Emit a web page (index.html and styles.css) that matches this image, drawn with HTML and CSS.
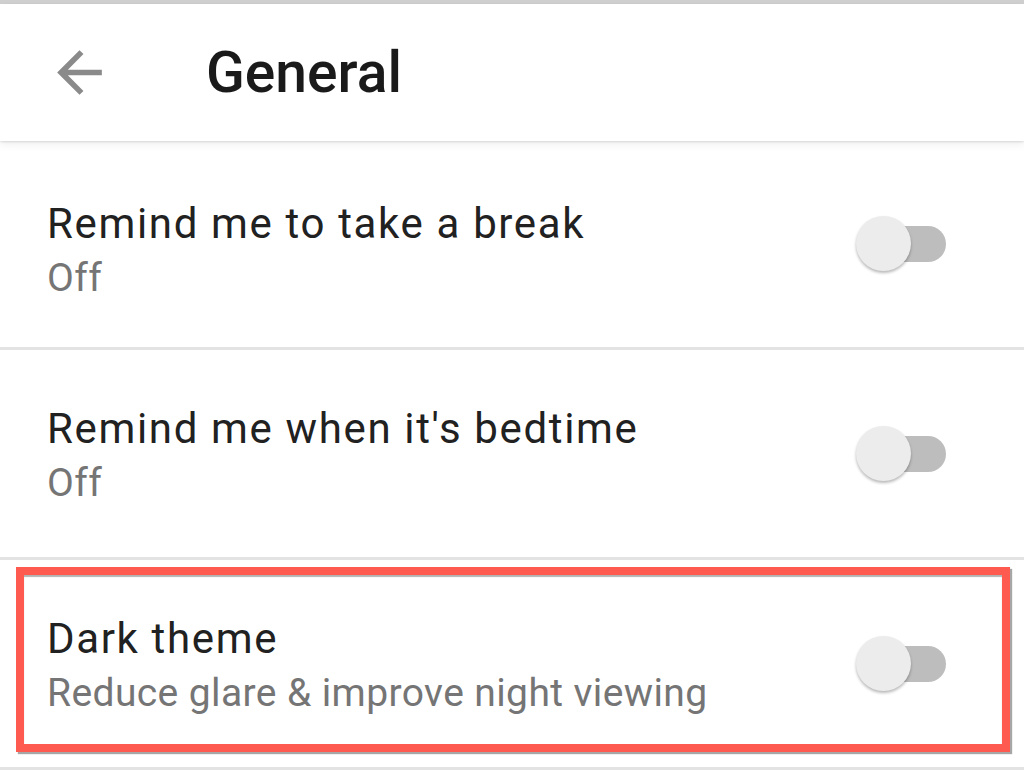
FILE: index.html
```html
<!DOCTYPE html>
<html lang="en">
<head>
<meta charset="utf-8">
<title>General</title>
<link rel="stylesheet" href="styles.css">
</head>
<body>
<div class="statusband"></div>
<header class="appbar">
  <button class="back" aria-label="Back">
    <svg viewBox="0 0 24 24" width="67" height="67"><path d="M20 11H7.83l5.59-5.59L12 4l-8 8 8 8 1.41-1.41L7.83 13H20v-2z" fill="#8a8a8a"/></svg>
  </button>
  <h1 class="title">General</h1>
</header>
<main class="list">
  <div class="row first">
    <div class="text">
      <div class="primary">Remind me to take a break</div>
      <div class="secondary">Off</div>
    </div>
    <div class="switch"><span class="track"></span><span class="thumb"></span></div>
  </div>
  <div class="row">
    <div class="text">
      <div class="primary">Remind me when it's bedtime</div>
      <div class="secondary">Off</div>
    </div>
    <div class="switch"><span class="track"></span><span class="thumb"></span></div>
  </div>
  <div class="row highlighted">
    <div class="text">
      <div class="primary">Dark theme</div>
      <div class="secondary">Reduce glare &amp; improve night viewing</div>
    </div>
    <div class="switch"><span class="track"></span><span class="thumb"></span></div>
  </div>
</main>
</body>
</html>
```
FILE: styles.css
```css
* { box-sizing: border-box; }
html, body { margin: 0; padding: 0; }
body {
  width: 1024px;
  height: 779px;
  overflow: hidden;
  background: #ffffff;
  font-family: Roboto, "Liberation Sans", sans-serif;
}
.statusband {
  height: 4px;
  background: #cfcfcf;
}
.appbar {
  position: relative;
  z-index: 2;
  height: 137px;
  background: #ffffff;
  display: flex;
  align-items: center;
  box-shadow: 0 1px 2px rgba(0,0,0,0.12), 0 4px 8px rgba(0,0,0,0.06);
}
.back {
  border: 0;
  background: none;
  padding: 0;
  margin-left: 46px;
  width: 67px;
  height: 67px;
  display: flex;
}
.title {
  margin: 0 0 0 93px;
  font-size: 57px;
  font-weight: 500;
  color: #1a1a1a;
}
.list { display: flex; flex-direction: column; }
.row {
  position: relative;
  height: 210px;
  display: flex;
  align-items: center;
  justify-content: space-between;
  padding: 0 78px 0 47px;
  border-bottom: 3px solid #e3e3e3;
}
.row.first { height: 209px; }
.text {
  display: flex;
  flex-direction: column;
  padding-top: 8px;
}
.row.first .text { padding-top: 18px; }
.primary {
  font-size: 42px;
  line-height: 50px;
  letter-spacing: 1.65px;
  color: #212121;
}
.secondary {
  font-size: 39px;
  line-height: 58px;
  letter-spacing: 0.4px;
  color: #757575;
}
.switch {
  position: relative;
  width: 90px;
  height: 56px;
}
.track {
  position: absolute;
  right: 0;
  top: 10px;
  width: 76px;
  height: 36px;
  border-radius: 18px;
  background: #bdbdbd;
}
.thumb {
  position: absolute;
  left: 0;
  top: 0;
  width: 55px;
  height: 55px;
  border-radius: 50%;
  background: #ececec;
  box-shadow: 0 2px 3px rgba(0,0,0,0.28);
}
.highlighted::after {
  content: "";
  position: absolute;
  left: 16px;
  right: 14px;
  top: 7px;
  bottom: 15px;
  border: 8px solid #fe5a4f;
  box-shadow: 2px 2px 1px rgba(0,0,0,0.35), inset 0 2px 1px rgba(0,0,0,0.3);
  pointer-events: none;
}
```
